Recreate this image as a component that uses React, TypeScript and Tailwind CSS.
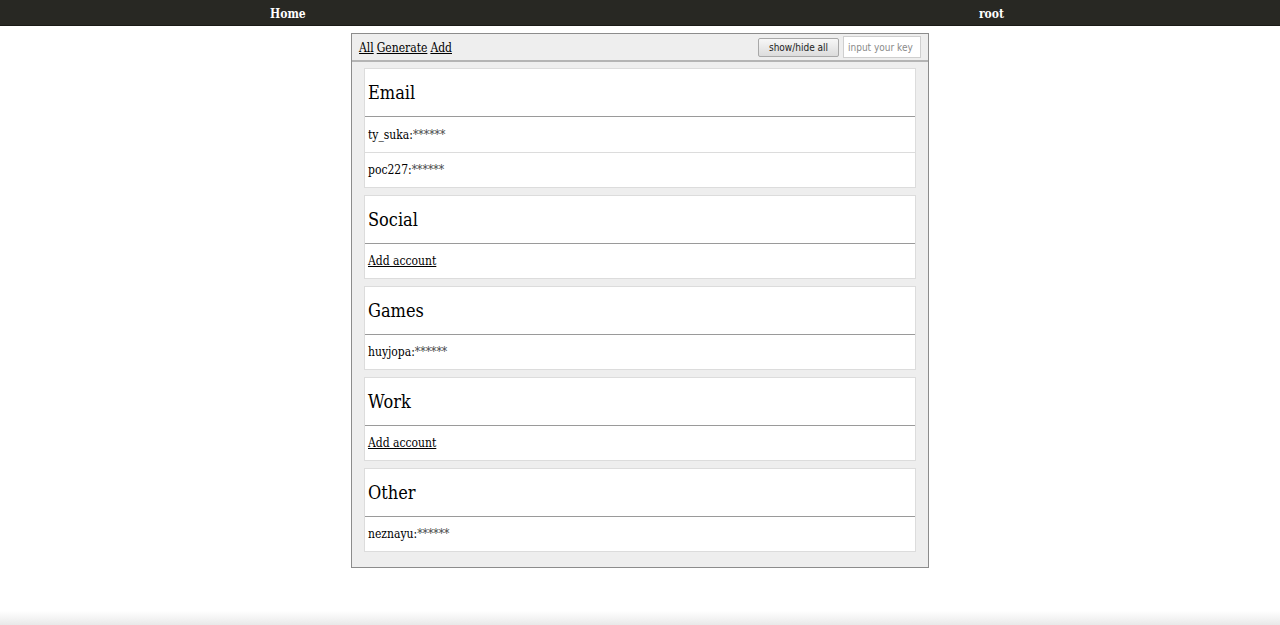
import React from "react";

type Group = {
  title: string;
  accounts: string[];
};

const groups: Group[] = [
  { title: "Email", accounts: ["ty_suka", "poc227"] },
  { title: "Social", accounts: [] },
  { title: "Games", accounts: ["huyjopa"] },
  { title: "Work", accounts: [] },
  { title: "Other", accounts: ["neznayu"] },
];

const serif = "font-['DejaVu_Serif_Condensed','DejaVu_Serif',serif] [font-stretch:condensed]";

const GroupCard = ({ group }: { group: Group }) => {
  const many = group.accounts.length > 1;
  return (
    <div className="border border-[#dcdcdc] bg-white">
      <div className="h-[48px] flex items-center px-[3px] border-b border-[#9a9a9a] text-[18px] text-black">
        {group.title}
      </div>
      {group.accounts.length === 0 ? (
        <div className="h-[34px] flex items-center px-[3px] text-[12px]">
          <a href="#" className="underline text-black">
            Add account
          </a>
        </div>
      ) : (
        group.accounts.map((name, i) => (
          <div
            key={name}
            className={`flex items-center px-[3px] text-[12px] text-black ${
              i > 0
                ? "h-[35px] border-t border-[#dcdcdc]"
                : many
                ? "h-[35px]"
                : "h-[34px]"
            }`}
          >
            {name}:<span className="text-[#444]">******</span>
          </div>
        ))
      )}
    </div>
  );
};

export default function App() {
  return (
    <div className={`h-[625px] flex flex-col bg-white overflow-hidden ${serif}`}>
      <nav className="h-[26px] shrink-0 bg-[#282823] border-b border-[#1a1a16] flex items-center justify-between pl-[270px] pr-[276px]">
        <a href="#" className="text-white font-bold text-[12px] pt-[2px]">
          Home
        </a>
        <a href="#" className="text-white font-bold text-[12px] pt-[2px]">
          root
        </a>
      </nav>

      <div className="mt-[7px] mx-auto w-[578px] border border-[#8c8c8c] bg-[#eeeeee]">
        <div className="h-[28px] flex items-center justify-between pl-[7px] pr-[7px] border-b-2 border-[#b4b4b4] text-[12px]">
          <div className="flex gap-[3px] pt-[1px]">
            <a href="#" className="underline text-black">All</a>
            <a href="#" className="underline text-black">Generate</a>
            <a href="#" className="underline text-black">Add</a>
          </div>
          <div className="flex items-center gap-[4px] font-['DejaVu_Sans_Condensed','DejaVu_Sans',sans-serif]">
            <button className="h-[19px] w-[81px] mt-[1px] rounded-[2px] border border-[#a8a8a8] bg-gradient-to-b from-[#f7f7f7] to-[#dcdcdc] text-[10px] text-[#222] leading-none">
              show/hide all
            </button>
            <input
              className="h-[22px] w-[78px] border border-[#cfcfcf] bg-white px-[4px] text-[10px] placeholder:text-[#8a8a8a] outline-none"
              placeholder="input your key"
            />
          </div>
        </div>
        <div className="flex flex-col gap-[7px] pt-[6px] pb-[15px] px-[12px]">
          {groups.map((g) => (
            <GroupCard key={g.title} group={g} />
          ))}
        </div>
      </div>

      <div className="flex-1" />
      <div className="h-[14px] shrink-0 bg-gradient-to-b from-white to-[#e9e9e9]" />
    </div>
  );
}
